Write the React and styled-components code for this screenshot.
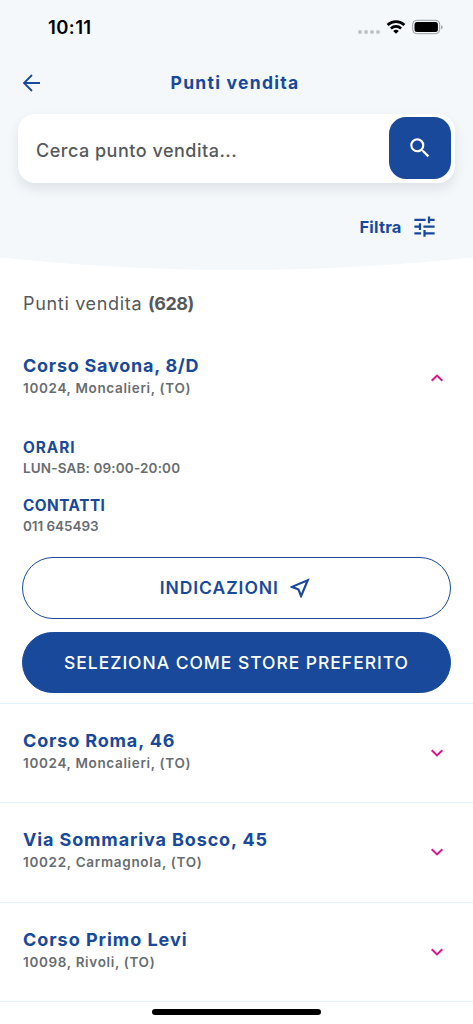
import React, { useState } from 'react'
import styled, { createGlobalStyle } from 'styled-components'
import { MdOutlineNearMe, MdSearch, MdTune } from 'react-icons/md'

const BLUE = '#18499b'
const PINK = '#e0148a'
const GREY = '#55595d'

const GlobalStyle = createGlobalStyle`
  * {
    box-sizing: border-box;
  }
  body {
    margin: 0;
    background: #fff;
    font-family: Inter, "Liberation Sans", sans-serif;
  }
  button, input {
    font: inherit;
    border: 0;
    padding: 0;
    background: none;
  }
`

const Screen = styled.div`
  display: flex;
  flex-direction: column;
  width: 473px;
  height: 1024px;
  overflow: hidden;
  background: #fff;
`

const Header = styled.header`
  height: 270px;
  background: #f4f8fb;
  clip-path: ellipse(786px 270px at 50% 0);
`

const StatusBar = styled.div`
  display: flex;
  align-items: center;
  justify-content: space-between;
  height: 54px;
  padding: 0 30px 0 48px;
`

const Clock = styled.span`
  font-size: 18.5px;
  font-weight: 600;
  letter-spacing: 0.4px;
`

const NavBar = styled.nav`
  display: grid;
  grid-template-columns: 60px 1fr 60px;
  align-items: center;
  height: 60px;
  padding-bottom: 2px;
`

const BackButton = styled.button`
  display: flex;
  padding-left: 22px;
`

const Title = styled.h1`
  margin: 0;
  padding-right: 3px;
  text-align: center;
  font-size: 17.5px;
  font-weight: 700;
  line-height: 24px;
  letter-spacing: ${props => props.$spacing};
  color: ${BLUE};
`

const SearchBox = styled.div`
  display: flex;
  align-items: center;
  height: 68.6px;
  margin: 0 18px;
  padding: 0 4.5px 0 18px;
  border-radius: 17px;
  background: #fff;
  box-shadow: 0 6px 12px rgba(40, 50, 60, 0.1);
`

const SearchInput = styled.input`
  flex: 1;
  min-width: 0;
  height: 40px;
  margin-top: 4px;
  outline: none;
  font-size: 18px;
  font-weight: 500;
  letter-spacing: 0.5px;
  color: ${GREY};
  &::placeholder {
    color: ${GREY};
    opacity: 1;
  }
`

const SearchButton = styled.button`
  display: flex;
  align-items: center;
  justify-content: center;
  width: 62px;
  height: 62px;
  border-radius: 17px;
  background: ${BLUE};
  color: #fff;
`

const FilterButton = styled.button`
  display: flex;
  align-items: center;
  gap: 9px;
  height: 28px;
  margin: 30px 35.4px 0 auto;
  font-size: 16.5px;
  font-weight: 700;
  letter-spacing: 0.2px;
  color: ${BLUE};
`

const Counter = styled.p`
  margin: 0;
  height: 60px;
  padding: 22px 23px 0;
  font-size: 18px;
  line-height: 24px;
  letter-spacing: 0.68px;
  color: ${GREY};
  b {
    font-weight: 700;
    letter-spacing: -0.5px;
  }
`

const Store = styled.section`
  border-bottom: 1px solid #e2f3f9;
`

const StoreHead = styled.div`
  display: flex;
  align-items: center;
  justify-content: space-between;
  height: 98.4px;
  padding: 0 29px ${props => (props.$open ? '4px' : '2.6px')} 23px;
  cursor: pointer;
`

const StoreTitle = styled.div`
  padding-bottom: 2px;
`

const StoreName = styled.h2`
  margin: 0;
  font-size: 18px;
  font-weight: 700;
  line-height: 24px;
  letter-spacing: ${props => props.$spacing};
  color: ${BLUE};
`

const Detail = styled.p`
  margin: 0;
  font-size: 13.5px;
  font-weight: 600;
  line-height: 20px;
  letter-spacing: ${props => props.$spacing};
  color: #686d71;
`

const Chevron = styled.svg`
  margin-top: 2px;
  transform: ${props => (props.$open ? 'rotate(180deg)' : 'none')};
`

const StoreBody = styled.div`
  padding: 8.6px 23px 9.6px;
`

const Info = styled.div`
  margin-bottom: 17.3px;
`

const InfoLabel = styled.h3`
  margin: 0;
  font-size: 15.3px;
  font-weight: 700;
  line-height: 21px;
  letter-spacing: ${props => props.$spacing};
  color: ${BLUE};
`

const Actions = styled.div`
  display: flex;
  flex-direction: column;
  gap: 13.4px;
  margin: 21px -0.6px 0;
`

const PillButton = styled.button`
  display: flex;
  align-items: center;
  justify-content: center;
  gap: 8.5px;
  height: 61.3px;
  border: 1.5px solid ${BLUE};
  border-radius: 31px;
  background: ${props => (props.$filled ? BLUE : '#fff')};
  color: ${props => (props.$filled ? '#fff' : BLUE)};
  font-size: 17.5px;
  font-weight: ${props => (props.$filled ? 500 : 600)};
  letter-spacing: ${props => props.$spacing};
`

const HomeIndicator = styled.div`
  flex: none;
  width: 169px;
  height: 6px;
  margin: 6.5px auto 0;
  border-radius: 3px;
  background: #000;
`

const STORES = [
  {
    name: 'Corso Savona, 8/D',
    nameSpacing: '0.75px',
    address: '10024, Moncalieri, (TO)',
    addressSpacing: '0.67px',
    hours: 'LUN-SAB: 09:00-20:00',
    phone: '011 645493',
  },
  {
    name: 'Corso Roma, 46',
    nameSpacing: '0.86px',
    address: '10024, Moncalieri, (TO)',
    addressSpacing: '0.67px',
  },
  {
    name: 'Via Sommariva Bosco, 45',
    nameSpacing: '0.87px',
    address: '10022, Carmagnola, (TO)',
    addressSpacing: '0.7px',
  },
  {
    name: 'Corso Primo Levi',
    nameSpacing: '0.97px',
    address: '10098, Rivoli, (TO)',
    addressSpacing: '0.67px',
  },
]

const StatusIcons = () => (
  <svg width="86" height="16" viewBox="0 0 86 16">
    <g fill="#bfc3c7">
      <circle cx="3" cy="13" r="2" />
      <circle cx="9" cy="13" r="2" />
      <circle cx="15" cy="13" r="2" />
      <circle cx="21" cy="13" r="2" />
    </g>
    <g fill="none" stroke="#000" strokeWidth="2.7">
      <path d="M30.6 6a12.2 12.2 0 0 1 16.8 0" />
      <path d="M33.9 9.4a7.6 7.6 0 0 1 10.2 0" />
    </g>
    <path d="M39 14.8l-2.8-2.8a4.2 4.2 0 0 1 5.6 0z" />
    <rect x="55.7" y="1.3" width="27" height="13.4" rx="4" fill="none" stroke="#9a9da0" />
    <rect x="57.5" y="3.1" width="23.4" height="9.8" rx="2.5" />
    <path d="M84.2 6v4.4q1.4-.7 1.4-2.2t-1.4-2.2z" fill="#9a9da0" />
  </svg>
)

const BackArrow = () => (
  <svg width="20" height="20" viewBox="0 0 20 20" fill="none" stroke={BLUE} strokeWidth="1.8">
    <path d="M18 10H2M10 2l-8 8 8 8" />
  </svg>
)

const StoreItem = ({ store, open, onToggle }) => (
  <Store>
    <StoreHead $open={open} onClick={onToggle}>
      <StoreTitle>
        <StoreName $spacing={store.nameSpacing}>{store.name}</StoreName>
        <Detail $spacing={store.addressSpacing}>{store.address}</Detail>
      </StoreTitle>
      <Chevron $open={open} width="14" height="10" viewBox="0 0 14 10">
        <path d="M1.7 2.2L7 7.4l5.3-5.2" fill="none" stroke={PINK} strokeWidth="2" />
      </Chevron>
    </StoreHead>
    {open && store.hours && (
      <StoreBody>
        <Info>
          <InfoLabel $spacing="1px">ORARI</InfoLabel>
          <Detail $spacing="0.15px">{store.hours}</Detail>
        </Info>
        <Info>
          <InfoLabel $spacing="0.5px">CONTATTI</InfoLabel>
          <Detail $spacing="-0.05px">{store.phone}</Detail>
        </Info>
        <Actions>
          <PillButton $spacing="0.96px">
            INDICAZIONI
            <MdOutlineNearMe size={26} />
          </PillButton>
          <PillButton $filled $spacing="0.96px">
            SELEZIONA COME STORE PREFERITO
          </PillButton>
        </Actions>
      </StoreBody>
    )}
  </Store>
)

export default function App() {
  const [openIndex, setOpenIndex] = useState(0)

  return (
    <Screen>
      <GlobalStyle />
      <Header>
        <StatusBar>
          <Clock>10:11</Clock>
          <StatusIcons />
        </StatusBar>
        <NavBar>
          <BackButton>
            <BackArrow />
          </BackButton>
          <Title $spacing="1.27px">Punti vendita</Title>
        </NavBar>
        <SearchBox>
          <SearchInput placeholder="Cerca punto vendita..." />
          <SearchButton>
            <MdSearch size={26} />
          </SearchButton>
        </SearchBox>
        <FilterButton>
          Filtra
          <MdTune size={27} />
        </FilterButton>
      </Header>
      <Counter>
        Punti vendita <b>(628)</b>
      </Counter>
      {STORES.map((store, i) => (
        <StoreItem
          key={store.name}
          store={store}
          open={i === openIndex}
          onToggle={() => setOpenIndex(i === openIndex ? -1 : i)}
        />
      ))}
      <HomeIndicator />
    </Screen>
  )
}
